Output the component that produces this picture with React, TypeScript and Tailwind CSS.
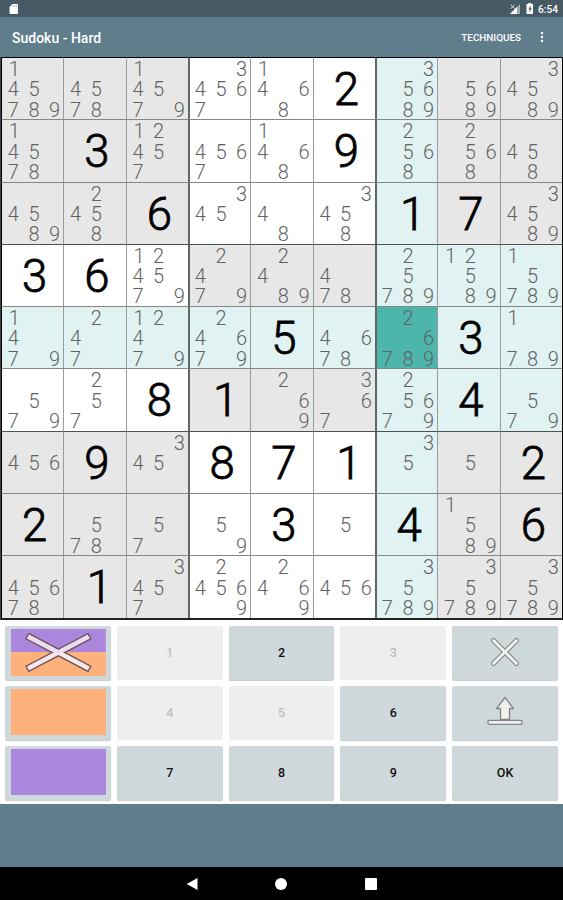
import { ReactNode } from "react";

/* One digit is a solved cell; "c" followed by digits lists pencil marks. */
const BOARD: string[][] = [
  ["c145789", "c4578", "c14579", "c34567", "c1468", "2", "c35689", "c5689", "c34589"],
  ["c14578", "3", "c12457", "c4567", "c1468", "9", "c2568", "c2568", "c458"],
  ["c4589", "c2458", "6", "c345", "c48", "c3458", "1", "7", "c34589"],
  ["3", "6", "c124579", "c2479", "c2489", "c478", "c25789", "c12589", "c15789"],
  ["c1479", "c247", "c12479", "c24679", "5", "c4678", "c26789", "3", "c1789"],
  ["c579", "c257", "8", "1", "c269", "c367", "c25679", "4", "c579"],
  ["c456", "9", "c345", "8", "7", "1", "c35", "c5", "2"],
  ["2", "c578", "c57", "c59", "3", "c5", "4", "c1589", "6"],
  ["c45678", "1", "c3457", "c24569", "c2469", "c456", "c35789", "c35789", "c35789"],
];

const SEL_ROW = 4;
const SEL_COL = 6;

function cellColor(r: number, c: number) {
  if (r === SEL_ROW && c === SEL_COL) return "bg-[#4db6ac]";
  const sameBox = Math.floor(r / 3) === 1 && Math.floor(c / 3) === 2;
  if (r === SEL_ROW || c === SEL_COL || sameBox) return "bg-[#e0f2f1]";
  return (Math.floor(r / 3) + Math.floor(c / 3)) % 2 === 0 ? "bg-[#e7e7e7]" : "bg-white";
}

function Cell({ value, r, c }: { value: string; r: number; c: number }) {
  const left = c === 0 ? "border-l border-l-black" : c % 3 === 0 ? "border-l-2 border-l-[#626666]" : "border-l border-l-[#9a9c9c]";
  const top = r === 0 ? "border-t border-t-black" : r % 3 === 0 ? "border-t-[1.5px] border-t-[#4c5050]" : "border-t border-t-[#858888]";
  const thick = c !== 0 && c % 3 === 0;
  return (
    <div className={`flex min-h-0 min-w-0 ${cellColor(r, c)} ${left} ${top}`}>
      {value[0] === "c" ? (
        <div className={`mt-px grid h-[61px] w-[62px] shrink-0 grid-cols-3 grid-rows-3 text-center text-[20px] leading-5 font-light text-[#626262] ${thick ? "" : "ml-px"}`}>
          {[1, 2, 3, 4, 5, 6, 7, 8, 9].map((n) => (
            <span key={n} className={n === 1 ? "h-5 pl-[2px]" : "h-5"}>{value.includes(String(n)) ? n : ""}</span>
          ))}
        </div>
      ) : (
        <div className={`h-[62px] w-full pt-px text-center text-[45.5px] leading-[62px] font-light text-black [-webkit-text-stroke:0.8px_#000] ${value === "1" ? (thick ? "pl-[11px]" : "pl-[9px]") : "pl-[4px]"}`}>
          {value}
        </div>
      )}
    </div>
  );
}

function Key({ children, disabled }: { children: ReactNode; disabled?: boolean }) {
  return (
    <button
      className={`flex h-[54px] items-center justify-center rounded-[2px] text-[12.5px] font-medium ${
        disabled ? "bg-[#eceeef] text-[#bcbebe]" : "bg-[#cfd8da] text-[#111] shadow-[0_1px_1px_#c3cbce]"
      }`}
    >
      {children}
    </button>
  );
}

function Swatch({ children }: { children: ReactNode }) {
  return (
    <button className="flex h-[54px] items-start rounded-[2px] bg-[#cfd8da] pt-[2.6px] pr-[5px] pl-[6px] shadow-[0_1px_1px_#c3cbce]">
      {children}
    </button>
  );
}

export default function App() {
  return (
    <div className="flex h-[900px] w-[563px] flex-col overflow-hidden bg-[#607d8b] font-[Roboto,sans-serif]">
      <div className="flex h-[17px] shrink-0 items-center bg-[#455a64] pr-[5px] pl-[9px] text-white">
        <svg width="10" height="12" viewBox="0 0 10 12" className="mt-px" fill="#fff">
          <path d="M3.5 1H8q1 0 1 1v8q0 1-1 1H1.5q-1 0-1-1V4Z" />
          <path d="M4 2v2M5.7 2v2M7.4 2v2" stroke="#90a0a7" strokeWidth=".7" />
        </svg>
        <svg width="11" height="10" viewBox="0 0 11 10" className="ml-auto">
          <path d="M10 0v10H0Z" fill="#a2adb1" />
          <path d="M7 3v7H0Z" fill="#fff" />
          <path d="M.7.7l4 4M4.7.7l-4 4" stroke="#dce2e4" strokeWidth="1" />
        </svg>
        <svg width="8" height="11" viewBox="0 0 8 11" className="ml-[5px]">
          <path d="M2.3 0h3v1H7v10H.5V1h1.8Z" fill="#fff" />
          <path d="M4.5 2.5L2.3 6.2h1.3v3L5.8 5.4H4.5Z" fill="#455a64" />
        </svg>
        <span className="mt-[3px] ml-[4px] text-[10.2px] leading-none font-medium">6:54</span>
      </div>
      <header className="flex h-10 shrink-0 items-center pr-[19px] pl-3 text-white">
        <h1 className="pt-[2px] text-[14px] font-medium">Sudoku - Hard</h1>
        <span className="ml-auto pt-[2px] text-[9.9px] font-medium">TECHNIQUES</span>
        <svg width="4" height="12" viewBox="0 0 4 12" className="ml-[19px]" fill="#fff">
          <circle cx="2" cy="2" r="1.25" />
          <circle cx="2" cy="6" r="1.25" />
          <circle cx="2" cy="10" r="1.25" />
        </svg>
      </header>
      <main className="h-[747px] shrink-0 bg-white">
        <div className="grid h-[562.5px] w-full grid-cols-9 grid-rows-9 border-r border-b-2 border-l border-r-black border-b-[#222] border-l-[#444]">
          {BOARD.map((row, r) => row.map((v, c) => <Cell key={`${r}-${c}`} value={v} r={r} c={c} />))}
        </div>
        <div className="grid grid-cols-5 gap-[6px] pt-[6.5px] pr-[5px] pl-[5px]">
          <Swatch>
            <svg width="95" height="47" viewBox="0 0 95 47">
              <path d="M0 0h95v23H0Z" fill="#aa87dc" />
              <path d="M0 23h95v24H0Z" fill="#ffb17c" />
              <g strokeLinecap="square" fill="none">
                <path d="M19 8.5L76 38.5M76 8.5L19 38.5" stroke="#6c5058" strokeWidth="7.2" />
                <path d="M19 8.5L76 38.5" stroke="#f7e8ea" strokeWidth="4.6" />
                <path d="M76 8.5L19 38.5" stroke="#f7e8ea" strokeWidth="4.6" />
                <path d="M20 9L47.5 23.5L75 9" stroke="#e8ddf5" strokeWidth="3.6" />
              </g>
            </svg>
          </Swatch>
          <Key disabled>1</Key>
          <Key>2</Key>
          <Key disabled>3</Key>
          <Key>
            <svg width="30" height="30" viewBox="0 0 30 30" fill="none" strokeLinecap="round" className="-mt-[3px]">
              <path d="M3.5 3.5l23 23M26.5 3.5l-23 23" stroke="#808486" strokeWidth="5" />
              <path d="M3.5 3.5l23 23M26.5 3.5l-23 23" stroke="#f0f1f1" strokeWidth="2.9" />
            </svg>
          </Key>
          <Swatch><div className="h-[46px] w-full bg-[#ffb17c]" /></Swatch>
          <Key disabled>4</Key>
          <Key disabled>5</Key>
          <Key>6</Key>
          <Key>
            <svg width="38" height="32" viewBox="0 0 38 32" fill="#eff0f0" stroke="#808486" strokeWidth="1.3" strokeLinejoin="round" className="-mt-[4px]">
              <path d="M19 2.5l8.5 11h-4v10.8h-9V13.5h-4Z" />
              <rect x="2" y="25.3" width="34" height="4" rx="1" />
            </svg>
          </Key>
          <Swatch><div className="h-[46px] w-full bg-[#aa87dc]" /></Swatch>
          <Key>7</Key>
          <Key>8</Key>
          <Key>9</Key>
          <Key>OK</Key>
        </div>
      </main>
      <div className="flex-1" />
      <nav className="flex h-[33px] shrink-0 items-center bg-black pl-[186px]">
        <svg width="12" height="14" viewBox="0 0 12 14" fill="#fff"><path d="M11.5 1v12L.7 7Z" /></svg>
        <div className="ml-[77px] h-3 w-3 rounded-full bg-white" />
        <div className="ml-[78px] h-3 w-3 rounded-[1px] bg-white" />
      </nav>
    </div>
  );
}
